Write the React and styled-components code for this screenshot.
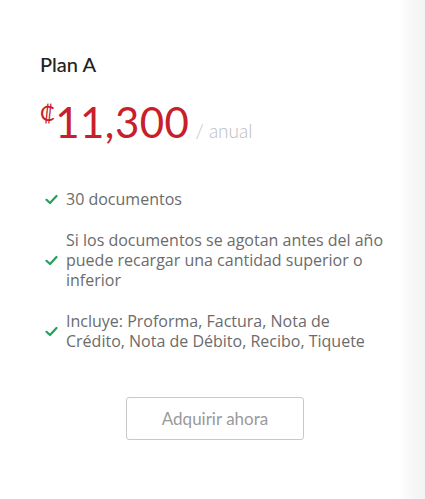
import React from "react";
import styled, { createGlobalStyle } from "styled-components";

const Global = createGlobalStyle`
  html, body { margin: 0; padding: 0; background: #fff; }
  body { width: 425px; height: 499px; overflow: hidden; }
`;

const Page = styled.div`
  width: 425px;
  height: 499px;
  display: flex;
  background: linear-gradient(to right, #fff 0, #fff 398px, #f8f8f8 410px, #f3f3f3 425px);
`;

const Card = styled.div`
  width: 360px;
  padding: 52px 0 0 40px;
  display: flex;
  flex-direction: column;
`;

const Title = styled.h2`
  margin: 0;
  font-family: Lato, "Open Sans", sans-serif;
  font-weight: 500;
  font-size: 20px;
  line-height: 24px;
  color: #222;
`;

const PriceRow = styled.div`
  margin-top: 21px;
  display: flex;
  align-items: baseline;
  font-family: Lato, "Open Sans", sans-serif;
`;

const Currency = styled.span`
  color: #c8202a;
  font-size: 22px;
  align-self: flex-start;
  margin-top: 2px;
`;

const Amount = styled.span`
  color: #c8202a;
  font-size: 42px;
  line-height: 50px;
  font-weight: 400;
  letter-spacing: 0.5px;
`;

const Period = styled.span`
  color: #bdbdbd;
  font-size: 19px;
  margin-left: 6px;
  font-weight: 300;
`;

const List = styled.ul`
  list-style: none;
  margin: 42px 0 0;
  padding: 0;
  display: flex;
  flex-direction: column;
  gap: 21px;
  width: 345px;
`;

const Item = styled.li`
  display: flex;
  align-items: center;
  gap: 8px;
  padding-left: 5px;
  font-family: "Open Sans", sans-serif;
  font-size: 16px;
  line-height: 20px;
  color: #6b6b6b;
`;

const Check = styled.svg`
  flex: none;
  width: 13px;
  height: 13px;
`;

const ButtonRow = styled.div`
  display: flex;
  justify-content: flex-start;
  margin-top: 46px;
  padding-left: 86px;
`;

const Button = styled.button`
  width: 178px;
  height: 43px;
  background: #fff;
  border: 1px solid #c9c9c9;
  border-radius: 3px;
  font-family: Lato, "Open Sans", sans-serif;
  font-size: 17px;
  color: #9a9a9a;
  cursor: pointer;
`;

const CheckIcon = () => (
  <Check viewBox="0 0 13 13">
    <path d="M1.5 6.8 L5 10 L11.5 3" fill="none" stroke="#23a05a" strokeWidth="2.2" strokeLinecap="round" strokeLinejoin="round" />
  </Check>
);

const features = [
  "30 documentos",
  "Si los documentos se agotan antes del año puede recargar una cantidad superior o inferior",
  "Incluye: Proforma, Factura, Nota de Crédito, Nota de Débito, Recibo, Tiquete",
];

export default function App() {
  return (
    <>
      <Global />
      <Page>
        <Card>
          <Title>Plan A</Title>
          <PriceRow>
            <Currency>₡</Currency>
            <Amount>11,300</Amount>
            <Period>/ anual</Period>
          </PriceRow>
          <List>
            {features.map((f) => (
              <Item key={f}>
                <CheckIcon />
                <span>{f}</span>
              </Item>
            ))}
          </List>
          <ButtonRow>
            <Button>Adquirir ahora</Button>
          </ButtonRow>
        </Card>
      </Page>
    </>
  );
}
